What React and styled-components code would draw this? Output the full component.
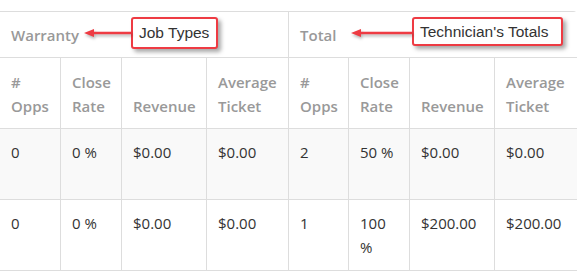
import React from 'react'
import styled, { createGlobalStyle } from 'styled-components'

const GlobalStyle = createGlobalStyle`
  body {
    margin: 0;
    background: #fff;
    font-family: 'Open Sans', 'Liberation Sans', sans-serif;
  }
`

const COLORS = {
  border: '#dddddd',
  head: '#999999',
  text: '#333333',
  stripe: '#f9f9f9',
  red: '#ee3b43',
}

const Page = styled.div`
  position: relative;
  width: 581px;
  height: 272px;
  padding-top: 11px;
  box-sizing: border-box;
  overflow: hidden;
`

const Panel = styled.div`
  display: grid;
  grid-template-columns: 61px 61px 85px 82px 60px 61px 85px 82px;
  width: 577px;
  border-top: 1px solid ${COLORS.border};
  border-right: 1px solid ${COLORS.border};
  border-top-right-radius: 4px;
  box-sizing: border-box;
  font-size: 15px;
  line-height: 24px;
`

const Cell = styled.div`
  display: flex;
  align-items: ${p => (p.$bottom ? 'flex-end' : 'flex-start')};
  height: ${p => p.$height}px;
  padding: 11px 9px 10px 11px;
  box-sizing: border-box;
  border-bottom: 1px solid ${COLORS.border};
  border-right: ${p => (p.$last ? 'none' : `1px solid ${COLORS.border}`)};
  background: ${p => (p.$striped ? COLORS.stripe : '#fff')};
  color: ${COLORS.text};
  overflow-wrap: break-word;
`

const GroupCell = styled(Cell)`
  grid-column: span 4;
  padding-top: 10px;
  color: ${COLORS.head};
  font-weight: 600;
`

const HeadCell = styled(Cell)`
  color: ${COLORS.head};
  font-weight: 600;
`

const Callout = styled.div`
  position: absolute;
  left: ${p => p.$left}px;
  top: ${p => p.$top}px;
  display: flex;
  align-items: center;
`

const Arrow = styled.svg`
  display: block;
  margin-top: ${p => p.$shift}px;
  filter: drop-shadow(1px 2px 1.5px rgba(0, 0, 0, 0.3));
`

const Box = styled.div`
  display: flex;
  align-items: center;
  width: ${p => p.$width}px;
  height: ${p => p.$height}px;
  padding-left: 6px;
  box-sizing: border-box;
  border: 2px solid ${COLORS.red};
  border-radius: 3px;
  background: #fff;
  box-shadow: 3px 3px 4px rgba(0, 0, 0, 0.35);
  color: #333;
  font-family: 'Liberation Sans', Arial, sans-serif;
  font-size: 15.5px;
  white-space: nowrap;
`

const ArrowCallout = ({ left, top, length, width, height, shift = 0, children }) => (
  <Callout $left={left} $top={top}>
    <Arrow width={length} height="12" viewBox={`0 0 ${length} 12`} $shift={shift}>
      <path d={`M10 6 H${length}`} stroke={COLORS.red} strokeWidth="2.5" />
      <path d="M0 6 L10 2 L10 10 Z" fill={COLORS.red} />
    </Arrow>
    <Box $width={width} $height={height}>{children}</Box>
  </Callout>
)

const groups = ['Warranty', 'Total']
const heads = [['#', 'Opps'], ['Close', 'Rate'], ['Revenue'], ['Average', 'Ticket']]
const rows = [
  ['0', '0 %', '$0.00', '$0.00', '2', '50 %', '$0.00', '$0.00'],
  ['0', '0 %', '$0.00', '$0.00', '1', '100 %', '$200.00', '$200.00'],
]

const App = () => {
  return (
    <Page>
      <GlobalStyle />
      <Panel>
        {groups.map((g, i) => (
          <GroupCell key={g} $height={46} $bottom $last={i === 1}>{g}</GroupCell>
        ))}
        {[...heads, ...heads].map((h, i) => (
          <HeadCell key={i} $height={71} $bottom $last={i === 7}>
            <span>
              {h.map((line, j) => (
                <React.Fragment key={j}>
                  {j > 0 && <br />}
                  {line}
                </React.Fragment>
              ))}
            </span>
          </HeadCell>
        ))}
        {rows.map((r, ri) =>
          r.map((v, i) => (
            <Cell key={`${ri}-${i}`} $height={71} $striped={ri === 0} $last={i === 7}>
              <span>{v}</span>
            </Cell>
          ))
        )}
      </Panel>

      <ArrowCallout left={84} top={17} length={47} width={87} height={32}>
        Job Types
      </ArrowCallout>
      <ArrowCallout left={351} top={17} length={61} width={151} height={29} shift={2}>
        Technician's Totals
      </ArrowCallout>
    </Page>
  )
}

export default App
